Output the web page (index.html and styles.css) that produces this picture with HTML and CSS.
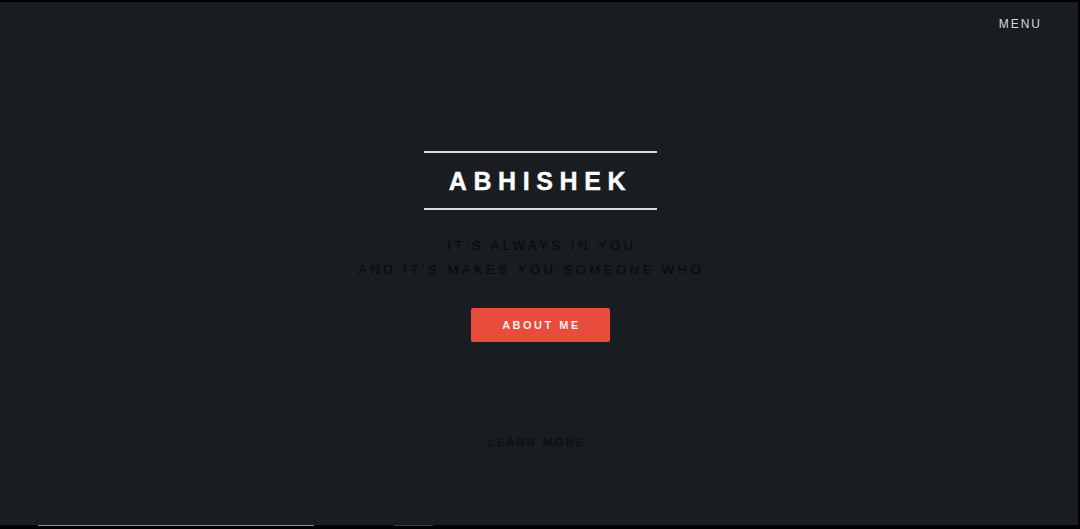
FILE: index.html
```html
<!DOCTYPE html>
<html lang="en">
<head>
<meta charset="utf-8">
<title>Abhishek</title>
<link rel="stylesheet" href="styles.css">
</head>
<body>
<div class="page">
  <header class="topbar">
    <a class="menu" href="#">MENU</a>
  </header>
  <main class="hero">
    <div class="title-box">
      <h1 class="title">ABHISHEK</h1>
    </div>
    <p class="tagline">IT'S ALWAYS IN YOU<br>AND IT'S MAKES YOU SOMEONE WHO...</p>
    <a class="btn" href="#">ABOUT ME</a>
    <a class="learn" href="#">LEARN MORE</a>
  </main>
</div>
<div class="scrollbar">
  <span class="thumb thumb-a"></span>
  <span class="thumb thumb-b"></span>
</div>
</body>
</html>
```
FILE: styles.css
```css
html, body {
  margin: 0;
  padding: 0;
  background: #000;
  overflow: hidden;
}
body {
  font-family: "Liberation Sans", Arial, sans-serif;
  padding-top: 2px;
}
.page {
  background: #191c20;
  height: 523px;
  margin-right: 2px;
  display: flex;
  flex-direction: column;
}
.topbar {
  display: flex;
  justify-content: flex-end;
  padding: 15px 36px 0 0;
  height: 18px;
}
.menu {
  color: #d6d8da;
  text-decoration: none;
  font-size: 12px;
  letter-spacing: 2px;
  line-height: 14px;
}
.hero {
  display: flex;
  flex-direction: column;
  align-items: center;
  padding-top: 116px;
  padding-left: 2px;
}
.title-box {
  width: 233px;
  border-top: 2px solid #d9dbdd;
  border-bottom: 2px solid #d9dbdd;
  display: flex;
  justify-content: center;
  padding: 15px 0 14px;
}
.title {
  margin: 0;
  color: #fff;
  font-size: 25px;
  font-weight: bold;
  letter-spacing: 6.6px;
  line-height: 26px;
  padding-left: 1px;
  -webkit-text-stroke: 0.4px #fff;
}
.tagline {
  margin: 24px 0 0;
  text-align: center;
  color: #07090b;
  font-size: 13px;
  letter-spacing: 3.55px;
  line-height: 24px;
  padding-left: 4px;
}
.btn {
  margin-top: 26px;
  width: 139px;
  height: 34px;
  background: #e74c3c;
  border-radius: 2px;
  color: #f6f0ee;
  text-decoration: none;
  font-size: 11px;
  font-weight: bold;
  letter-spacing: 2.5px;
  display: flex;
  align-items: center;
  justify-content: center;
  padding-left: 3px;
  box-sizing: border-box;
}
.learn {
  margin-top: 93px;
  margin-left: -6px;
  color: #0b0d10;
  text-decoration: none;
  font-size: 11px;
  letter-spacing: 2.5px;
  line-height: 14px;
  -webkit-text-stroke: 0.2px #0b0d10;
}
.scrollbar {
  height: 4px;
  display: flex;
  align-items: flex-start;
}
.thumb {
  height: 1px;
  background: #8a8d90;
}
.thumb-a {
  margin-left: 38px;
  width: 276px;
}
.thumb-b {
  margin-left: 80px;
  width: 39px;
  background: #3a3d40;
}
```
